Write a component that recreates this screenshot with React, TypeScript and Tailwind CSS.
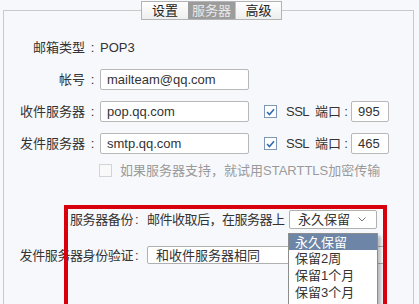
import React from "react";

function Check() {
  return (
    <span className="flex h-[13px] w-[13px] items-center justify-center border border-[#7d97b8] bg-white">
      <svg width="9" height="8" viewBox="0 0 9 8">
        <path d="M1 4 L3.5 6.5 L8 1.2" fill="none" stroke="#2f6db5" strokeWidth="1.6" />
      </svg>
    </span>
  );
}

function Chevron() {
  return (
    <svg width="8" height="5" viewBox="0 0 8 5">
      <path d="M0.5 0.5 L4 4 L7.5 0.5" fill="none" stroke="#777" strokeWidth="1" />
    </svg>
  );
}

function Label({ text, w }: { text: string; w: string }) {
  return (
    <span className={`flex justify-end ${w}`}>
      <span>{text}</span>
      <span className="w-[15px] text-center">:</span>
    </span>
  );
}

function Input({ value, w }: { value: string; w: string }) {
  return (
    <div className={`flex h-[21px] items-center rounded-[2px] border border-[#b8b8b8] bg-white pl-[6px] ${w}`}>{value}</div>
  );
}

export default function App() {
  const font = "font-['Liberation_Sans','Noto_Sans_CJK_SC',sans-serif]";
  return (
    <div className={`relative h-[304px] w-[419px] overflow-hidden bg-[#f7f8fc] text-[13px] text-[#333] ${font}`}>
      {/* tabs */}
      <div className="relative z-10 flex h-[20px] pl-[141px] pt-[1px]">
        <div className="flex h-[19px] border border-[#b3b3b3] bg-gradient-to-b from-white to-[#eeeeee] leading-none">
          <div className="flex w-[46px] items-center justify-center text-[13px] text-[#222]">设置</div>
          <div className="flex w-[47px] items-center justify-center bg-[#9c9c9c] text-[13px] text-[#e9e9e9]">服务器</div>
          <div className="flex w-[46px] items-center justify-center border-l border-[#c4c4c4] text-[13px] text-[#222]">高级</div>
        </div>
      </div>
      {/* panel */}
      <div className="-mt-[10px] ml-[3px] mr-[5px] h-[300px] border border-b-0 border-[#c9c9c9] leading-none">
        {/* 邮箱类型 */}
        <div className="mt-[30px] flex h-[13px] items-center">
          <Label text="邮箱类型" w="w-[96px]" />
          <span>POP3</span>
        </div>
        {/* 帐号 */}
        <div className="mt-[15px] flex h-[21px] items-center">
          <Label text="帐号" w="w-[96px]" />
          <Input value="mailteam@qq.com" w="w-[149px]" />
        </div>
        {/* 收件 */}
        <div className="mt-[11px] flex h-[21px] items-center">
          <Label text="收件服务器" w="w-[96px]" />
          <Input value="pop.qq.com" w="w-[149px]" />
          <div className="ml-[15px]"><Check /></div>
          <span className="ml-[9px] w-[29px] tracking-[-0.5px]">SSL</span>
          <span>端口</span>
          <span className="w-[10px] text-center">:</span>
          <Input value="995" w="w-[38px]" />
        </div>
        {/* 发件 */}
        <div className="mt-[11px] flex h-[21px] items-center">
          <Label text="发件服务器" w="w-[96px]" />
          <Input value="smtp.qq.com" w="w-[149px]" />
          <div className="ml-[15px]"><Check /></div>
          <span className="ml-[9px] w-[29px] tracking-[-0.5px]">SSL</span>
          <span>端口</span>
          <span className="w-[10px] text-center">:</span>
          <Input value="465" w="w-[38px]" />
        </div>
        {/* STARTTLS */}
        <div className="mt-[10px] flex h-[13px] items-center pl-[95px]">
          <span className="h-[13px] w-[13px] border border-[#d4d4d4] bg-[#f9f9f9]" />
          <span className="ml-[8px] text-[#9a9a9a]">如果服务器支持，就试用STARTTLS加密传输</span>
        </div>
        {/* 服务器备份 */}
        <div className="mt-[33px] flex h-[19px] items-center">
          <span className="ml-[66px] tracking-[-0.4px]">服务器备份</span>
          <span className="w-[14px] pl-[2px]">:</span>
          <span className="w-[142px] tracking-[-0.5px]">邮件收取后，在服务器上</span>
          <div className="flex h-[19px] w-[88px] items-center justify-between rounded-[2px] border border-[#b0b0b0] bg-white pl-[8px] pr-[10px]">
            <span>永久保留</span>
            <Chevron />
          </div>
        </div>
        {/* 身份验证 */}
        <div className="mt-[17px] flex h-[18px] items-center">
          <span className="flex w-[143px] justify-end">
            <span className="tracking-[-0.4px]">发件服务器身份验证</span>
            <span className="w-[14px] pl-[2px]">:</span>
          </span>
          <div className="flex h-[18px] w-[238px] items-center justify-between rounded-[2px] border border-[#b0b0b0] bg-white pl-[8px] pr-[8px]">
            <span>和收件服务器相同</span>
            <Chevron />
          </div>
        </div>
      </div>

      {/* red annotation box */}
      <div className="absolute left-[64px] top-[205px] h-[120px] w-[323px] border-[4px] border-[#d9000d]" />

      {/* dropdown list */}
      <div className="absolute left-[288px] top-[233px] w-[90px] border border-[#8d8d8d] bg-white leading-none shadow-[3px_3px_3px_rgba(0,0,0,0.25)]">
        <div className="flex h-[16px] items-center bg-[#6d86a7] pl-[6px] text-white">永久保留</div>
        <div className="flex h-[17px] items-center pl-[6px]">保留2周</div>
        <div className="flex h-[17px] items-center pl-[6px]">保留1个月</div>
        <div className="flex h-[17px] items-center pl-[6px]">保留3个月</div>
        <div className="h-[20px]" />
      </div>
    </div>
  );
}
